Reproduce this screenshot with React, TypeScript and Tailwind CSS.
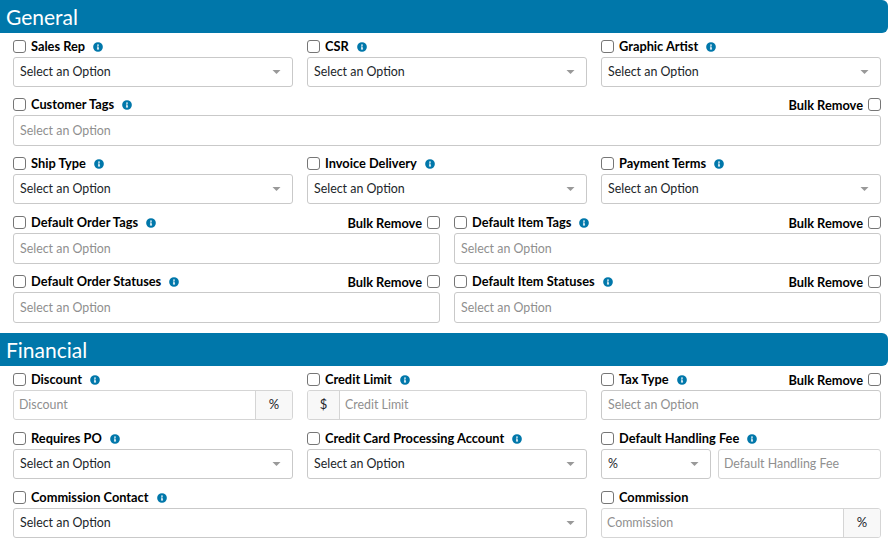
const font = "font-['Lato','Noto_Sans',sans-serif]";

function Info() {
  return (
    <svg viewBox="0 0 512 512" className="ml-2 h-[10px] w-[10px] shrink-0" fill="#0077aa">
      <path d="M256 8a248 248 0 1 0 0 496 248 248 0 0 0 0-496zm0 110a42 42 0 1 1 0 84 42 42 0 0 1 0-84zm56 254c0 7-5 12-12 12h-88c-7 0-12-5-12-12v-24c0-7 5-12 12-12h12v-64h-12c-7 0-12-5-12-12v-24c0-7 5-12 12-12h64c7 0 12 5 12 12v100h12c7 0 12 5 12 12z" />
    </svg>
  );
}

function Check() {
  return <input type="checkbox" className="m-0 h-[13px] w-[13px] shrink-0 appearance-none rounded-[3px] border border-[#767676] bg-white" />;
}

function Label({ text, info = true, bulk = false }: { text: string; info?: boolean; bulk?: boolean }) {
  return (
    <div className="flex h-[17px] items-center">
      <Check />
      <span className="ml-[5px] text-[12.8px] leading-[17px] font-bold text-black">{text}</span>
      {info && <Info />}
      {bulk && (
        <div className="ml-auto flex items-center">
          <span className="mt-px mr-[5px] text-[12.8px] leading-[17px] font-bold text-black">Bulk Remove</span>
          <Check />
        </div>
      )}
    </div>
  );
}

function Select({ value = 'Select an Option' }: { value?: string }) {
  return (
    <div className="mt-[2px] flex h-[30px] items-center justify-between rounded-[3px] border border-[#c9c9c9] bg-white pr-[11px] pl-[6px] text-[12.4px] text-[#212529]">
      <span>{value}</span>
      <svg viewBox="0 0 10 5" className="h-[4px] w-[9px]" fill="#999999"><path d="M0 0h10L5 5z" /></svg>
    </div>
  );
}

function Tags({ short = false }: { short?: boolean }) {
  return (
    <div className={short ? 'mt-[2px] flex h-[30px] items-center rounded-[3px] border border-[#c9c9c9] bg-white pt-px pl-[6px] text-[12.4px] text-[#8f8f8f]' : 'mt-[2px] flex h-[31px] items-center rounded-[3px] border border-[#c9c9c9] bg-white pt-px pl-[6px] text-[12.4px] text-[#8f8f8f]'}>
      Select an Option
    </div>
  );
}

function Addon({ text, side }: { text: string; side: 'left' | 'right' }) {
  return (
    <div
      className={
        side === 'left'
          ? 'flex w-[32px] items-center justify-center border-r border-[#d5d5d5] bg-[#f8f8f8] text-[13px] text-[#212529]'
          : 'flex w-[37px] items-center justify-center border-l border-[#d5d5d5] bg-[#f8f8f8] text-[13px] text-[#212529]'
      }
    >
      {text}
    </div>
  );
}

function Input({ text, before, after }: { text: string; before?: string; after?: string }) {
  return (
    <div className="mt-[2px] flex h-[30px] overflow-hidden rounded-[3px] border border-[#d5d5d5] bg-white text-[12.4px] text-[#8f8f8f]">
      {before && <Addon text={before} side="left" />}
      <div className="flex flex-1 items-center pl-[5px]">{text}</div>
      {after && <Addon text={after} side="right" />}
    </div>
  );
}

function Header({ title }: { title: string }) {
  return (
    <div className="flex h-[33px] items-center rounded-r-[6px] bg-[#0077aa] pl-[6px] text-[21px] text-white">{title}</div>
  );
}

export default function App() {
  return (
    <div className={`h-[545px] w-[888px] overflow-hidden bg-white ${font}`}>
      <Header title="General" />
      <div className="pt-[5px] pr-[7px] pl-[13px]">
        <div className="grid grid-cols-[280px_280px_280px] gap-x-[14px]">
          <div><Label text="Sales Rep" /><Select /></div>
          <div><Label text="CSR" /><Select /></div>
          <div><Label text="Graphic Artist" /><Select /></div>
        </div>
        <div className="mt-[9px]"><Label text="Customer Tags" bulk /><Tags /></div>
        <div className="mt-[9px] grid grid-cols-[280px_280px_280px] gap-x-[14px]">
          <div><Label text="Ship Type" /><Select /></div>
          <div><Label text="Invoice Delivery" /><Select /></div>
          <div><Label text="Payment Terms" /><Select /></div>
        </div>
        <div className="mt-[10px] grid grid-cols-[427px_427px] gap-x-[14px]">
          <div><Label text="Default Order Tags" bulk /><Tags /></div>
          <div><Label text="Default Item Tags" bulk /><Tags /></div>
        </div>
        <div className="mt-[9px] grid grid-cols-[427px_427px] gap-x-[14px]">
          <div><Label text="Default Order Statuses" bulk /><Tags /></div>
          <div><Label text="Default Item Statuses" bulk /><Tags /></div>
        </div>
      </div>
      <div className="mt-[10px]"><Header title="Financial" /></div>
      <div className="pt-[5px] pr-[7px] pl-[13px]">
        <div className="grid grid-cols-[280px_280px_280px] gap-x-[14px]">
          <div><Label text="Discount" /><Input text="Discount" after="%" /></div>
          <div><Label text="Credit Limit" /><Input text="Credit Limit" before="$" /></div>
          <div><Label text="Tax Type" bulk /><Tags short /></div>
        </div>
        <div className="mt-[10px] grid grid-cols-[280px_280px_280px] gap-x-[14px]">
          <div><Label text="Requires PO" /><Select /></div>
          <div><Label text="Credit Card Processing Account" /><Select /></div>
          <div>
            <Label text="Default Handling Fee" />
            <div className="grid grid-cols-[110px_1fr] gap-x-[7px]">
              <Select value="%" />
              <Input text="Default Handling Fee" />
            </div>
          </div>
        </div>
        <div className="mt-[10px] grid grid-cols-[574px_280px] gap-x-[14px]">
          <div><Label text="Commission Contact" /><Select /></div>
          <div><Label text="Commission" info={false} /><Input text="Commission" after="%" /></div>
        </div>
      </div>
    </div>
  );
}
